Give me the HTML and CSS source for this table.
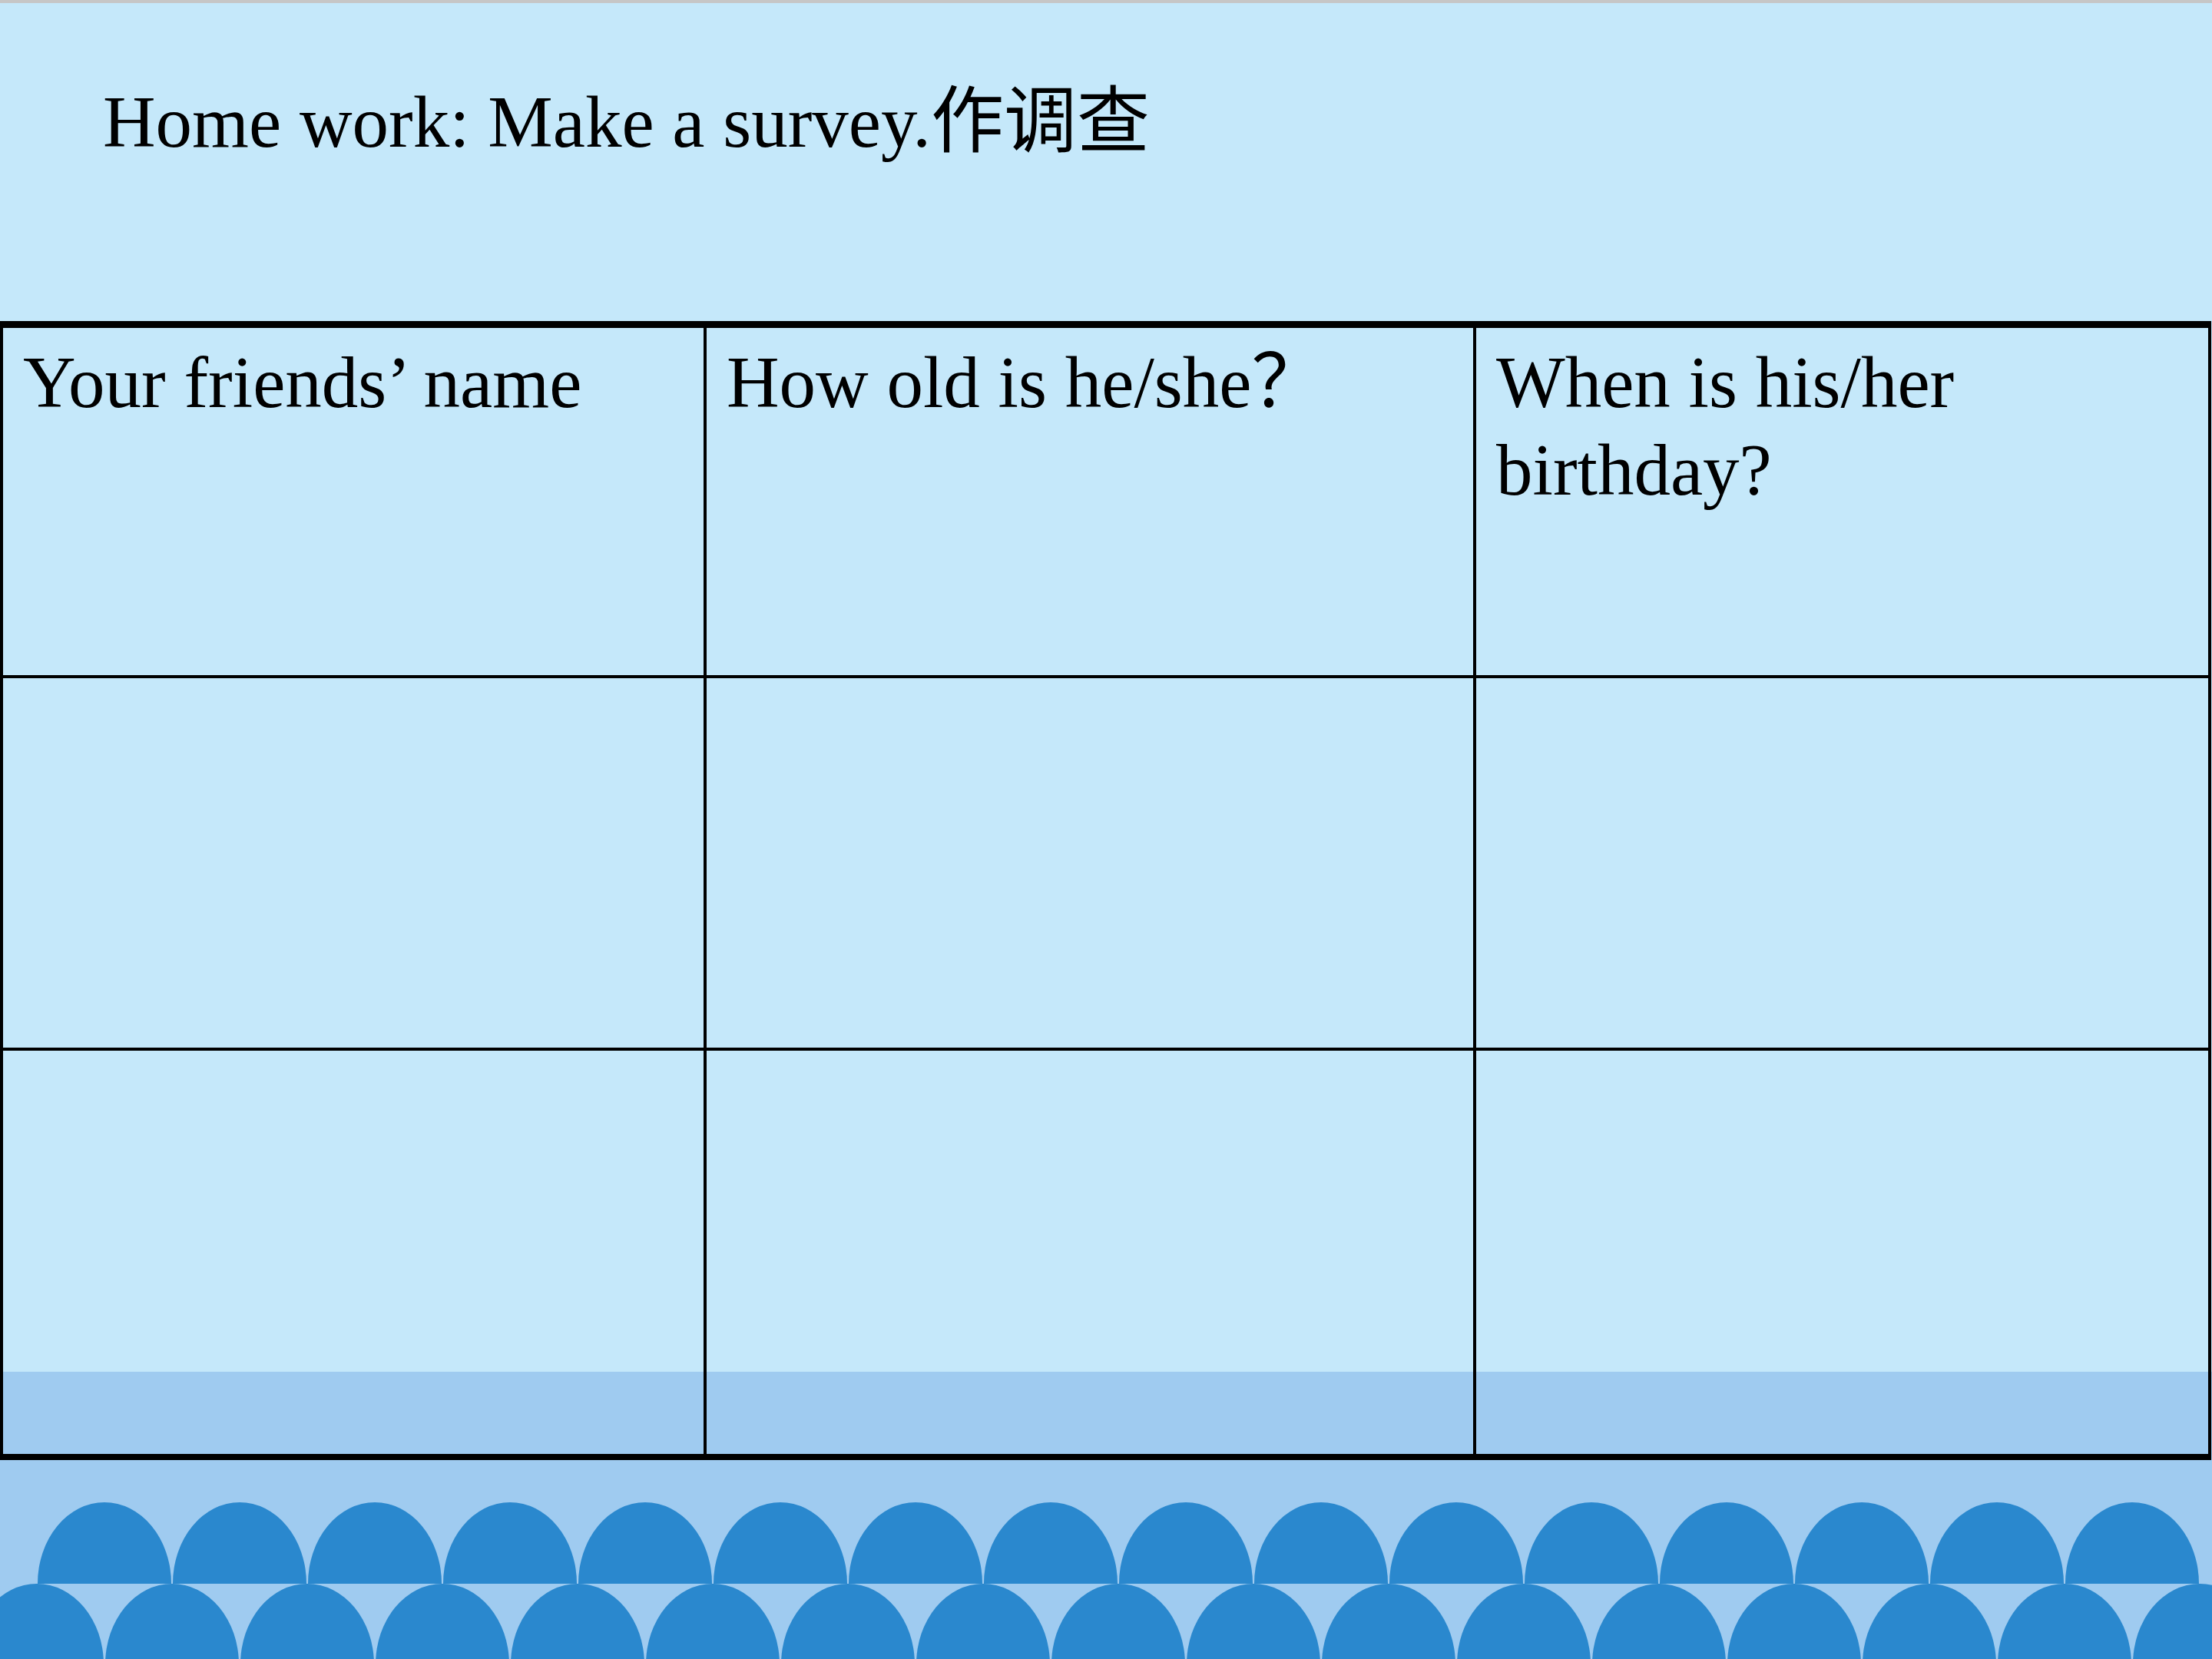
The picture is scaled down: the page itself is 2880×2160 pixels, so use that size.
FILE: index.html
```html
<!DOCTYPE html>
<html lang="en">
<head>
<meta charset="utf-8">
<title>Home work: Make a survey</title>
<link rel="stylesheet" href="styles.css">
</head>
<body>
<div class="frame-top"></div>
<main class="slide">
  <h1 class="title">Home work: Make a survey.作调查</h1>
  <div class="survey">
    <div class="cell">Your friends’ name</div>
    <div class="cell">How old is he/she？</div>
    <div class="cell last-col">When is his/her birthday?</div>
    <div class="cell"></div>
    <div class="cell"></div>
    <div class="cell last-col"></div>
    <div class="cell last-row"></div>
    <div class="cell last-row"></div>
    <div class="cell last-row last-col"></div>
  </div>
  <svg class="waves" width="2880" height="259" viewBox="0 0 2880 259" xmlns="http://www.w3.org/2000/svg">
    <g fill="#2a88ce">
      <path d="M49 161 A87 106 0 0 1 223 161 Z"/>
      <path d="M225 161 A87 106 0 0 1 399 161 Z"/>
      <path d="M401 161 A87 106 0 0 1 575 161 Z"/>
      <path d="M577 161 A87 106 0 0 1 751 161 Z"/>
      <path d="M753 161 A87 106 0 0 1 927 161 Z"/>
      <path d="M929 161 A87 106 0 0 1 1103 161 Z"/>
      <path d="M1105 161 A87 106 0 0 1 1279 161 Z"/>
      <path d="M1281 161 A87 106 0 0 1 1455 161 Z"/>
      <path d="M1457 161 A87 106 0 0 1 1631 161 Z"/>
      <path d="M1633 161 A87 106 0 0 1 1807 161 Z"/>
      <path d="M1809 161 A87 106 0 0 1 1983 161 Z"/>
      <path d="M1985 161 A87 106 0 0 1 2159 161 Z"/>
      <path d="M2161 161 A87 106 0 0 1 2335 161 Z"/>
      <path d="M2337 161 A87 106 0 0 1 2511 161 Z"/>
      <path d="M2513 161 A87 106 0 0 1 2687 161 Z"/>
      <path d="M2689 161 A87 106 0 0 1 2863 161 Z"/>

      <path d="M-39 266 A87 105 0 0 1 135 266 Z"/>
      <path d="M137 266 A87 105 0 0 1 311 266 Z"/>
      <path d="M313 266 A87 105 0 0 1 487 266 Z"/>
      <path d="M489 266 A87 105 0 0 1 663 266 Z"/>
      <path d="M665 266 A87 105 0 0 1 839 266 Z"/>
      <path d="M841 266 A87 105 0 0 1 1015 266 Z"/>
      <path d="M1017 266 A87 105 0 0 1 1191 266 Z"/>
      <path d="M1193 266 A87 105 0 0 1 1367 266 Z"/>
      <path d="M1369 266 A87 105 0 0 1 1543 266 Z"/>
      <path d="M1545 266 A87 105 0 0 1 1719 266 Z"/>
      <path d="M1721 266 A87 105 0 0 1 1895 266 Z"/>
      <path d="M1897 266 A87 105 0 0 1 2071 266 Z"/>
      <path d="M2073 266 A87 105 0 0 1 2247 266 Z"/>
      <path d="M2249 266 A87 105 0 0 1 2423 266 Z"/>
      <path d="M2425 266 A87 105 0 0 1 2599 266 Z"/>
      <path d="M2601 266 A87 105 0 0 1 2775 266 Z"/>
      <path d="M2777 266 A87 105 0 0 1 2951 266 Z"/>
    </g>
  </svg>
</main>
</body>
</html>
```

FILE: styles.css
```css
html, body {
  margin: 0;
  padding: 0;
}

body {
  width: 2880px;
  height: 2160px;
  overflow: hidden;
  background: linear-gradient(to bottom, #c5e8fa 0, #c5e8fa 1786px, #9fcbf0 1786px, #9fcbf0 100%);
  font-family: "Liberation Serif", "Noto Sans CJK SC", serif;
  color: #000;
}

.frame-top {
  height: 4px;
  background: #c6c6c6;
}

.slide {
  display: flex;
  flex-direction: column;
}

.title {
  margin: 98px 0 0 134px;
  font-size: 95px;
  line-height: 114px;
  font-weight: normal;
  height: 114px;
  white-space: nowrap;
}

.survey {
  margin-top: 202px;
  width: 2879px;
  box-sizing: border-box;
  display: grid;
  grid-template-columns: 916px 1002px 953px;
  grid-template-rows: 456px 485px 525px;
  border-top: 9px solid #000;
  border-bottom: 8px solid #000;
  border-left: 4px solid #000;
  border-right: 4px solid #000;
}

.cell {
  box-sizing: border-box;
  border-right: 4px solid #000;
  border-bottom: 4px solid #000;
  padding: 14px 20px 0 26px;
  font-size: 95px;
  line-height: 114px;
}

.cell.last-col {
  border-right: none;
}

.cell.last-row {
  border-bottom: none;
}

.waves {
  display: block;
}
```
